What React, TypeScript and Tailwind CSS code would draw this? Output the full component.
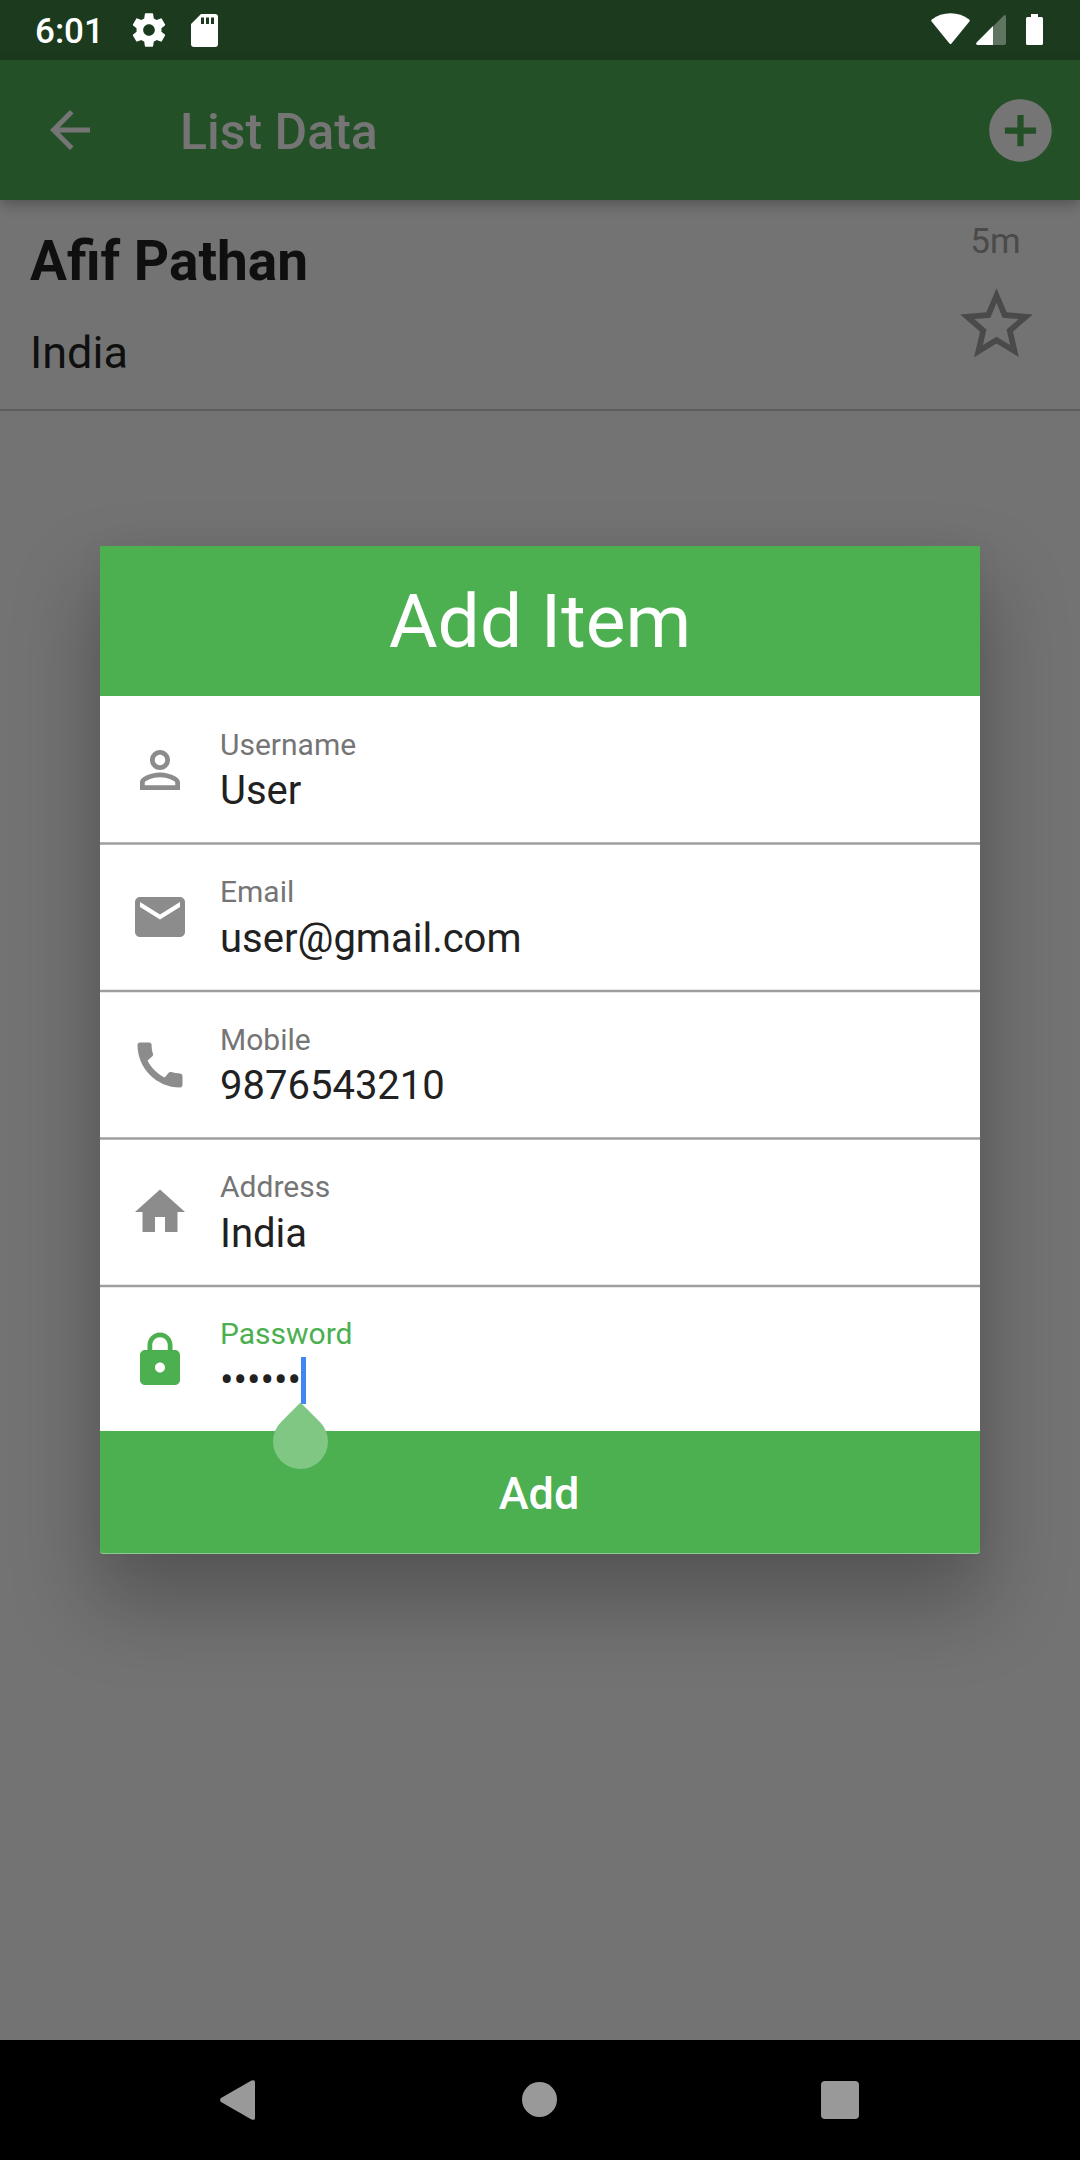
function Icon({ d, className }: { d: string; className: string }) {
  return (
    <svg viewBox="0 0 24 24" fill="currentColor" className={className}>
      <path d={d} />
    </svg>
  );
}

const icons = {
  gear: "M19.43 12.98c.04-.32.07-.64.07-.98s-.03-.66-.07-.98l2.11-1.65c.19-.15.24-.42.12-.64l-2-3.46c-.12-.22-.39-.3-.61-.22l-2.49 1c-.52-.4-1.08-.73-1.69-.98l-.38-2.65C14.46 2.18 14.25 2 14 2h-4c-.25 0-.46.18-.49.42l-.38 2.65c-.61.25-1.17.59-1.69.98l-2.49-1c-.23-.09-.49 0-.61.22l-2 3.46c-.13.22-.07.49.12.64l2.11 1.65c-.04.32-.07.65-.07.98s.03.66.07.98l-2.11 1.65c-.19.15-.24.42-.12.64l2 3.46c.12.22.39.3.61.22l2.49-1c.52.4 1.08.73 1.69.98l.38 2.65c.03.24.24.42.49.42h4c.25 0 .46-.18.49-.42l.38-2.65c.61-.25 1.17-.59 1.69-.98l2.49 1c.23.09.49 0 .61-.22l2-3.46c.12-.22.07-.49-.12-.64l-2.11-1.65zM12 15.5c-1.93 0-3.5-1.57-3.5-3.5s1.57-3.5 3.5-3.5 3.5 1.57 3.5 3.5-1.57 3.5-3.5 3.5z",
  back: "M20 11H7.83l5.59-5.59L12 4l-8 8 8 8 1.41-1.41L7.83 13H20v-2z",
  add: "M12 2C6.48 2 2 6.48 2 12s4.48 10 10 10 10-4.48 10-10S17.52 2 12 2zm5 11h-4v4h-2v-4H7v-2h4V7h2v4h4v2z",
  star: "M22 9.24l-7.19-.62L12 2 9.19 8.63 2 9.24l5.46 4.73L5.82 21 12 17.27 18.18 21l-1.63-7.03L22 9.24zM12 15.4l-3.76 2.27 1-4.28-3.32-2.88 4.38-.38L12 6.1l1.71 4.04 4.38.38-3.32 2.88 1 4.28L12 15.4z",
  person:
    "M12 5.9c1.16 0 2.1.94 2.1 2.1s-.94 2.1-2.1 2.1S9.9 9.16 9.9 8s.94-2.1 2.1-2.1m0 9c2.97 0 6.1 1.46 6.1 2.1v1.1H5.9V17c0-.64 3.13-2.1 6.1-2.1M12 4C9.79 4 8 5.79 8 8s1.79 4 4 4 4-1.79 4-4-1.79-4-4-4zm0 9c-2.67 0-8 1.34-8 4v3h16v-3c0-2.66-5.33-4-8-4z",
  mail: "M20 4H4c-1.1 0-1.99.9-1.99 2L2 18c0 1.1.9 2 2 2h16c1.1 0 2-.9 2-2V6c0-1.1-.9-2-2-2zm0 4l-8 5-8-5V6l8 5 8-5v2z",
  phone:
    "M20.01 15.38c-1.23 0-2.42-.2-3.53-.56-.35-.12-.74-.03-1.01.24l-1.57 1.97c-2.83-1.35-5.48-3.9-6.89-6.83l1.95-1.66c.27-.28.35-.67.24-1.02-.37-1.11-.56-2.3-.56-3.53 0-.54-.45-.99-.99-.99H4.19C3.65 3 3 3.24 3 3.99 3 13.28 10.73 21 20.01 21c.71 0 .99-.63.99-1.18v-3.45c0-.54-.45-.99-.99-.99z",
  home: "M10 20v-6h4v6h5v-8h3L12 3 2 12h3v8z",
  lock: "M18 8h-1V6c0-2.76-2.24-5-5-5S7 3.24 7 6v2H6c-1.1 0-2 .9-2 2v10c0 1.1.9 2 2 2h12c1.1 0 2-.9 2-2V10c0-1.1-.9-2-2-2zm-6 9c-1.1 0-2-.9-2-2s.9-2 2-2 2 .9 2 2-.9 2-2 2zm3.1-9H8.9V6c0-1.71 1.39-3.1 3.1-3.1 1.71 0 3.1 1.39 3.1 3.1v2z",
};

const fields = [
  { label: "Username", value: "User", icon: icons.person, row: "h-[149px] pt-[1px]", text: "mt-[2px]", gap: "mt-[5px]", line: "h-[3px] border-[#b6b6b6]" },
  { label: "Email", value: "user@gmail.com", icon: icons.mail, row: "h-[148px]", text: "mt-px", gap: "mt-[6px]", line: "h-1 border-[#e7e7e7]" },
  { label: "Mobile", value: "9876543210", icon: icons.phone, row: "h-[147px]", text: "mt-px", gap: "mt-[5px]", line: "h-[3px] border-[#b6b6b6]" },
  { label: "Address", value: "India", icon: icons.home, row: "h-[148px]", text: "mt-px", gap: "mt-[6px]", line: "h-1 border-[#e7e7e7]" },
];

function StatusBar() {
  return (
    <div className="flex h-[60px] items-center bg-[#1c3a1e] text-white">
      <span className="ml-[35px] w-[92px] pt-[2px] text-[35px] font-medium leading-none">6:01</span>
      <Icon d={icons.gear} className="ml-[2px] size-[40px]" />
      <svg viewBox="0 0 27 33" className="ml-[22px] h-[33px] w-[27px]">
        <path
          fill="currentColor"
          fillRule="evenodd"
          d="M10 0H24Q27 0 27 3V30Q27 33 24 33H3Q0 33 0 30V10ZM10 3.5V10H13V3.5ZM15 3.5V10H18V3.5ZM20 3.5V10H23V3.5Z"
        />
      </svg>
      <svg viewBox="0 0 39 32" className="-mt-[3px] ml-auto h-8 w-[39px]">
        <path fill="currentColor" d="M.6 8.500Q-.2 7.400.8 6.600Q9 .3 19.500.3T38.200 6.600Q39.200 7.400 38.400 8.500L20.500 30.500Q19.500 31.600 18.500 30.500Z" />
      </svg>
      <svg viewBox="0 0 30 30" className="ml-[6px] h-[30px] w-[30px]">
        <path fill="currentColor" opacity=".3" d="M17 11.500L27.800.6Q30-.8 30 1.800V28Q30 30 28 30H17Z" />
        <path fill="currentColor" d="M17 11V30H1.500Q-.8 29.500.6 27.500Z" />
      </svg>
      <svg viewBox="0 0 17 31" className="-mt-px ml-5 mr-[37px] h-[31px] w-[17px]">
        <path fill="currentColor" d="M5 0H12V3H15.500Q17 3 17 4.500V29.500Q17 31 15.500 31H1.500Q0 31 0 29.500V4.500Q0 3 1.500 3H5Z" />
      </svg>
    </div>
  );
}

function NavBar() {
  return (
    <div className="flex h-[120px] items-center bg-black text-[#999]">
      <svg viewBox="0 0 35 40" className="ml-[220px] h-10 w-[35px]">
        <path fill="currentColor" d="M1 18L31.500.6Q35-.8 35 2V38Q35 40.800 31.500 39.400L1 22Q-.8 20 1 18Z" />
      </svg>
      <div className="-mt-px ml-[267px] size-[35px] rounded-full bg-[#999]" />
      <div className="ml-[264px] size-[38px] rounded-[4px] bg-[#999]" />
    </div>
  );
}

function Dialog() {
  return (
    <div className="flex h-[1008px] w-[880px] flex-col rounded-b-[3px] bg-[#90c893] shadow-[0_45px_80px_7px_rgba(0,0,0,0.25),0_0_30px_rgba(0,0,0,0.04)]">
      <div className="flex h-[150px] items-center justify-center bg-[#4caf50] text-[75px] leading-none text-white">
        Add Item
      </div>
      {fields.map((f) => (
        <div key={f.label} className={`flex flex-col bg-white ${f.row}`}>
          <div className="flex flex-1 items-center">
            <Icon d={f.icon} className="ml-[30px] size-[60px] text-[#8c8c8c]" />
            <div className={`ml-[30px] flex h-[87px] flex-col ${f.text}`}>
              <span className="shrink-0 text-[30px] leading-[35px] text-[#757575]">{f.label}</span>
              <span className={`shrink-0 text-[40px] leading-[47px] text-[#212121] ${f.gap}`}>{f.value}</span>
            </div>
          </div>
          <div className={`border-y bg-[#9e9e9e] ${f.line}`} />
        </div>
      ))}
      <div className="flex h-[143px] items-center bg-white">
        <Icon d={icons.lock} className="ml-[30px] size-[60px] text-[#4caf50]" />
        <div className="ml-[30px] flex h-[87px] flex-col">
          <span className="shrink-0 text-[30px] leading-[35px] text-[#4caf50]">Password</span>
          <span className="relative mt-[6px] h-[47px] shrink-0 text-[40px] leading-[47px] text-[#212121]">
            ••••••
            <span className="absolute left-[81px] top-0 h-[47px] w-[5px] bg-[#4285f4]" />
            <span className="absolute left-[53px] top-[57px] size-[55px] rotate-45 rounded-full rounded-tl-none bg-[#81c784]" />
          </span>
        </div>
      </div>
      <div className="flex h-[122px] items-center justify-center rounded-b-[3px] bg-[#4caf50] pr-[2px] pt-[3px] text-[45px] font-medium leading-none text-white">
        Add
      </div>
    </div>
  );
}

export default function App() {
  return (
    <div className="relative flex h-[2160px] w-[1080px] flex-col overflow-hidden bg-[#737373] font-['Roboto',sans-serif]">
      <StatusBar />
      <header className="flex h-[140px] items-center bg-[#235026] text-[#757575] shadow-[0_5px_12px_rgba(0,0,0,0.25)]">
        <Icon d={icons.back} className="ml-10 size-[60px]" />
        <h1 className="ml-20 pt-[4px] text-[50px] font-medium leading-none">List Data</h1>
        <Icon d={icons.add} className="ml-auto mr-[22px] size-[75px]" />
      </header>
      <main className="flex-1">
        <div className="flex h-[211px] justify-between border-b-2 border-[#5d5d5d]">
          <div className="flex flex-col pl-[30px] pt-[29px] text-[#0f0f0f]">
            <span className="text-[55px] font-bold leading-[64px]">Afif Pathan</span>
            <span className="mt-[33px] text-[45px] leading-[53px]">India</span>
          </div>
          <div className="mr-10 flex w-[87px] flex-col items-center pt-[21px] text-[#4a4a4a]">
            <span className="mr-[2px] text-[35px] leading-[41px]">5m</span>
            <Icon d={icons.star} className="mt-[19px] size-[87px] shrink-0" />
          </div>
        </div>
      </main>
      <NavBar />
      <div className="absolute inset-x-0 bottom-[120px] top-[60px] flex items-center justify-center">
        <Dialog />
      </div>
    </div>
  );
}
